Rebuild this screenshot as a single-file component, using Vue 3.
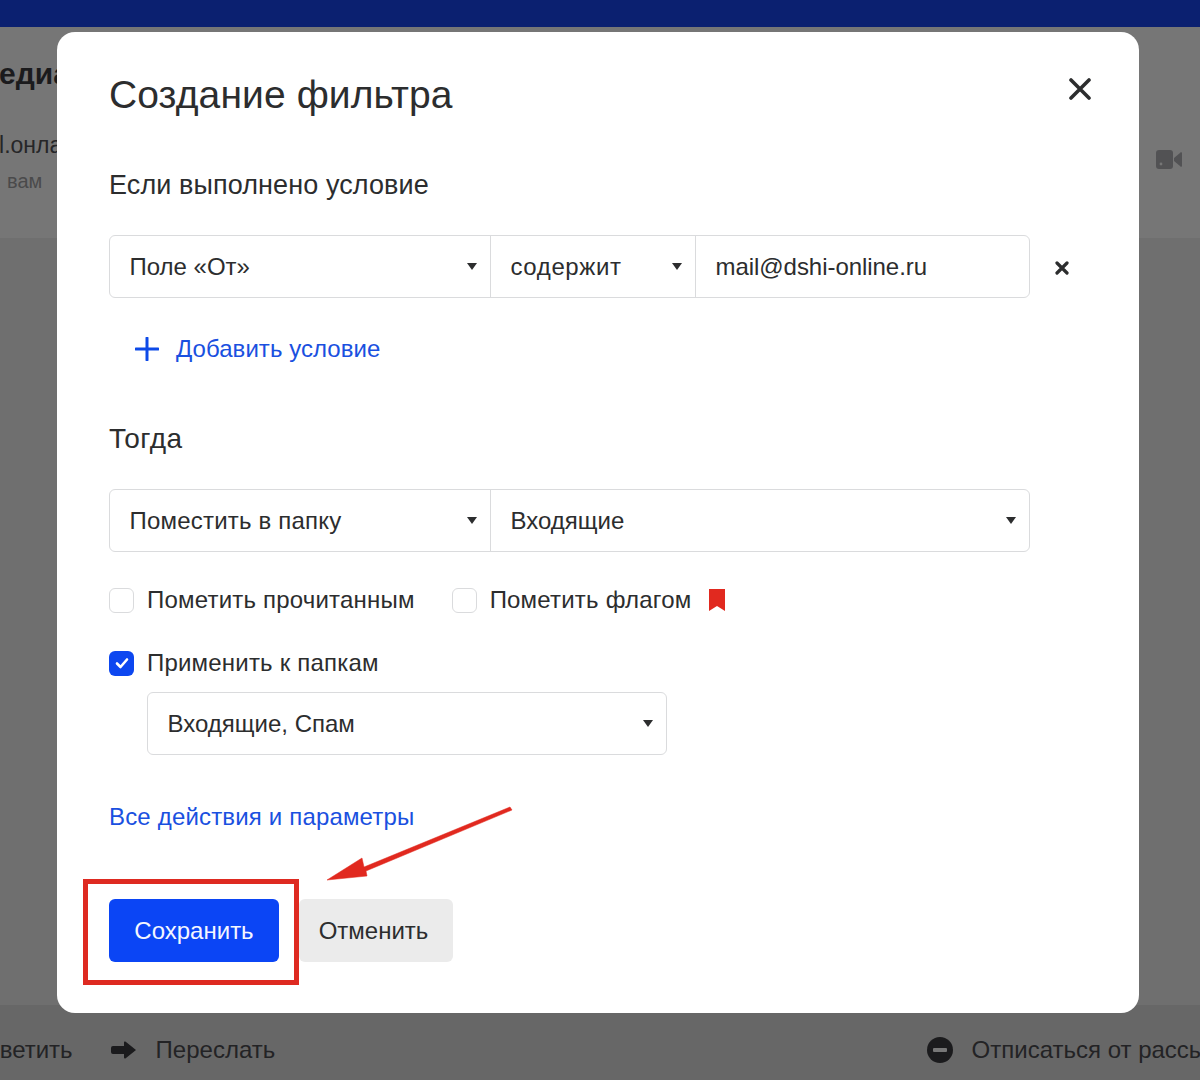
<script setup>
</script>

<template>
  <div class="page">
    <div class="topbar"></div>
    <header class="mail-head">
      <div class="subject">Медиа</div>
      <div class="sender">Mail.онлайн</div>
      <div class="to">вам</div>
      <svg class="video" viewBox="0 0 26 20" width="26" height="20">
        <path d="M3 0h11a3 3 0 0 1 3 3v13a3 3 0 0 1-3 3H3a3 3 0 0 1-3-3V3a3 3 0 0 1 3-3z" fill="#525254"/>
        <path d="M18 8l6-5a1 1 0 0 1 2 .5v12a1 1 0 0 1-2 .5l-6-5z" fill="#525254"/>
        <circle cx="5" cy="14" r="1.400" fill="#767676"/>
      </svg>
    </header>
    <main class="mail-body"></main>
    <footer class="mail-foot">
      <div class="foot-left">
        <span class="reply">Ответить</span>
        <svg class="arrow-icon" viewBox="0 0 26 20" width="26" height="20">
          <path d="M2 6h11V2.500a1 1 0 0 1 1.700-.7L25 10 14.700 18.200a1 1 0 0 1-1.700-.7V14H2a2 2 0 0 1-2-2V8a2 2 0 0 1 2-2z" fill="#1b1b1d"/>
        </svg>
        <span>Переслать</span>
      </div>
      <div class="foot-right">
        <svg viewBox="0 0 26 26" width="26" height="26">
          <circle cx="13" cy="13" r="13" fill="#1b1b1d"/>
          <rect x="6" y="11" width="14" height="4" rx="1" fill="#777"/>
        </svg>
        <span>Отписаться от рассылки</span>
      </div>
    </footer>

    <section class="modal">
      <div class="modal-head">
        <h1>Создание фильтра</h1>
        <svg class="close" viewBox="0 0 22 22" width="22" height="22">
          <path d="M2 2l18 18M20 2L2 20" stroke="#2c2d2e" stroke-width="3.600" stroke-linecap="round"/>
        </svg>
      </div>

      <h2 class="cond-title">Если выполнено условие</h2>
      <div class="cond-row">
        <div class="group">
          <div class="cell w1"><span>Поле «От»</span><i class="caret"></i></div>
          <div class="cell w2"><span class="wide">содержит</span><i class="caret"></i></div>
          <div class="cell grow"><span class="tight">mail@dshi-online.ru</span></div>
        </div>
        <svg class="remove" viewBox="0 0 14 14" width="14" height="14">
          <path d="M2 2l10 10M12 2L2 12" stroke="#2c2d2e" stroke-width="3.200" stroke-linecap="round"/>
        </svg>
      </div>
      <a class="add">
        <svg viewBox="0 0 24 24" width="24" height="24">
          <path d="M12 1v22M1 12h22" stroke="#0d4ae8" stroke-width="3" stroke-linecap="round"/>
        </svg>
        <span>Добавить условие</span>
      </a>

      <h2 class="then-title">Тогда</h2>
      <div class="group action">
        <div class="cell w1"><span class="spaced">Поместить в папку</span><i class="caret"></i></div>
        <div class="cell grow"><span>Входящие</span><i class="caret"></i></div>
      </div>

      <div class="checks">
        <label class="check"><i class="box"></i><span>Пометить прочитанным</span></label>
        <label class="check"><i class="box"></i><span>Пометить флагом</span>
          <svg class="flag" viewBox="0 0 16 22" width="16" height="22">
            <path d="M0 0h16v22l-8-5-8 5z" fill="#e1291f"/>
          </svg>
        </label>
      </div>
      <label class="check apply">
        <i class="box on">
          <svg viewBox="0 0 16 16" width="16" height="16">
            <path d="M3 8.500l3.500 3.500L13 4.500" fill="none" stroke="#fff" stroke-width="2.600" stroke-linecap="round" stroke-linejoin="round"/>
          </svg>
        </i>
        <span>Применить к папкам</span>
      </label>
      <div class="group folders">
        <div class="cell grow"><span>Входящие, Спам</span><i class="caret"></i></div>
      </div>

      <a class="all">Все действия и параметры</a>

      <div class="buttons">
        <button class="primary">Сохранить</button>
        <button class="secondary">Отменить</button>
      </div>

      <div class="mark"></div>
      <svg class="pointer" viewBox="0 0 190 80" width="190" height="80">
        <path d="M0 76L35 54 37 63 183 3 185 6 39 67 40 72z" fill="#e1291f" stroke="#e1291f" stroke-width="0.500" stroke-linejoin="round"/>
      </svg>
    </section>
  </div>
</template>

<style>
html, body { margin: 0; }
</style>

<style scoped>
.page {
  position: relative;
  width: 1200px;
  height: 1080px;
  overflow: hidden;
  display: flex;
  flex-direction: column;
  font-family: "Liberation Sans", Arial, sans-serif;
  color: #2c2d2e;
  background: #6f6f6f;
}
.topbar { height: 27px; background: #0b2070; flex: none; }
.mail-head {
  position: relative;
  height: 211px;
  flex: none;
  background: #767676;
  box-sizing: border-box;
  padding: 29px 0 0 0;
  overflow: hidden;
}
.subject { font-size: 30px; font-weight: 700; color: #1b1b1d; line-height: 36px; margin-left: -26px; }
.sender { font-size: 23px; color: #262628; line-height: 28px; margin: 39px 0 0 -38px; }
.to { font-size: 20px; color: #4a4a4b; line-height: 24px; margin: 10px 0 0 7px; }
.video { position: absolute; right: 18px; top: 123px; }
.mail-body { flex: 1; background: #6f6f6f; }
.mail-foot {
  height: 75px;
  flex: none;
  background: #676767;
  display: flex;
  justify-content: space-between;
  align-items: center;
  font-size: 24px;
  color: #232325;
  box-sizing: border-box;
  padding-top: 14px;
  white-space: nowrap;
}
.foot-left { display: flex; align-items: center; margin-left: -30px; }
.reply { margin-right: 38px; }
.arrow-icon { margin-right: 19px; }
.foot-right { display: flex; align-items: center; gap: 19px; margin-right: -44px; }

.modal {
  position: absolute;
  left: 57px;
  top: 32px;
  width: 1082px;
  height: 981px;
  box-sizing: border-box;
  padding: 40px 52px 0;
  background: #fff;
  border-radius: 18px;
}
.modal-head { display: flex; justify-content: space-between; align-items: flex-start; }
h1 { margin: 0; font-size: 39px; font-weight: 400; letter-spacing: 0.1px; line-height: 46px; color: #2c2d2e; }
.close { margin: 6px -4px 0 0; }
h2 { margin: 0; font-size: 27px; font-weight: 400; letter-spacing: 0.1px; line-height: 32px; color: #2c2d2e; }
.cond-title { margin-top: 51px; }
.then-title { margin-top: 59px; font-size: 28px; letter-spacing: 0.4px; }
.cond-row { display: flex; align-items: center; margin-top: 34px; }
.group {
  display: flex;
  width: 921px;
  height: 63px;
  box-sizing: border-box;
  border: 1.500px solid #dadbdd;
  border-radius: 6px;
  font-size: 24px;
  color: #2c2d2e;
}
.cell {
  display: flex;
  align-items: center;
  justify-content: space-between;
  padding: 0 13px 0 19.500px;
  box-sizing: border-box;
  border-right: 1.500px solid #dadbdd;
  white-space: nowrap;
}
.cell.grow { flex: 1; border-right: none; }
.w1 { width: 381px; }
.w2 { width: 205px; }
.wide { letter-spacing: 0.6px; }
.tight { letter-spacing: -0.05px; }
.spaced { letter-spacing: 0.2px; }
.caret {
  width: 0;
  height: 0;
  border-left: 5.500px solid transparent;
  border-right: 5.500px solid transparent;
  border-top: 7px solid #2c2d2e;
}
.remove { margin: 2px 0 0 25px; }
.add {
  display: flex;
  align-items: center;
  gap: 17px;
  margin: 36px 0 0 26px;
  height: 30px;
  color: #1a50e0;
  font-size: 24px;
  letter-spacing: 0.05px;
}
.action { margin-top: 34px; }
.checks { display: flex; gap: 37px; margin-top: 33px; }
.check { display: flex; align-items: center; gap: 13px; font-size: 24px; letter-spacing: 0.2px; line-height: 30px; color: #2c2d2e; }
.box {
  width: 25px;
  height: 25px;
  box-sizing: border-box;
  border: 1.500px solid #dadbdd;
  border-radius: 6px;
  display: flex;
  align-items: center;
  justify-content: center;
}
.box.on { background: #0d47f0; border: none; }
.flag { margin-left: 5px; }
.apply { margin-top: 33px; }
.folders { width: 520px; margin: 14px 0 0 38px; }
.all { display: block; margin-top: 47px; color: #1a50e0; font-size: 24px; letter-spacing: 0.17px; line-height: 30px; }
.buttons { display: flex; gap: 20px; margin-top: 67px; font-size: 24px; }
button {
  height: 63px;
  border: none;
  border-radius: 6px;
  font: inherit;
  padding: 0;
}
.primary { width: 170px; background: #0b45f5; color: #f4f6ff; }
.secondary { width: 154px; padding-right: 5px; background: #ebebeb; color: #2c2d2e; }
.mark {
  position: absolute;
  left: 26px;
  top: 847px;
  width: 216px;
  height: 106px;
  border: 5px solid #de2a21;
  box-sizing: border-box;
}
.pointer { position: absolute; left: 270px; top: 772px; }
</style>
